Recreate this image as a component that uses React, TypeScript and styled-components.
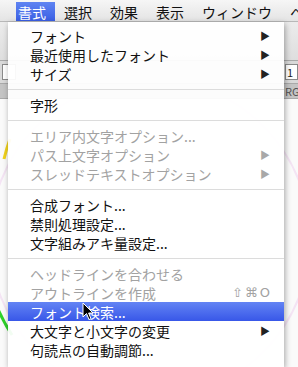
import * as React from 'react'
import styled, { createGlobalStyle } from 'styled-components'

const GlobalStyle = createGlobalStyle`
  html, body {
    margin: 0;
    padding: 0;
    width: 298px;
    height: 367px;
    overflow: hidden;
    background: #fff;
  }
  * {
    box-sizing: border-box;
    font-family: 'Noto Sans CJK JP', 'Noto Sans', sans-serif;
  }
`

const StyledScreen = styled.div`
  position: relative;
  width: 298px;
  height: 367px;
  display: flex;
  flex-direction: column;
  overflow: hidden;
`

const StyledMenuBar = styled.nav`
  height: 22px;
  flex: none;
  display: flex;
  align-items: stretch;
  padding-left: 16px;
  background: linear-gradient(#f6f6f6, #e4e4e4);
  border-bottom: 1px solid #b8b8b8;
  white-space: nowrap;
  overflow: hidden;
`

const StyledMenuTitle = styled.div<{ $active?: boolean }>`
  flex: none;
  display: flex;
  align-items: center;
  padding: 0 9px 0 ${(p) => (p.$active ? '2px' : '9px')};
  margin-top: 2px;
  font-size: 14px;
  line-height: 1;
  color: ${(p) => (p.$active ? '#fff' : '#111')};
  background: ${(p) => (p.$active ? 'linear-gradient(#5f84f2, #3a5fe4)' : 'transparent')};
`

const StyledToolbar = styled.div<{ $height: number; $bg: string }>`
  height: ${(p) => p.$height}px;
  flex: none;
  background: ${(p) => p.$bg};
  border-bottom: 1px solid #a9a9a9;
  display: flex;
  align-items: center;
  justify-content: space-between;
  padding: 0 0 0 2px;
  font-size: 11px;
  color: #555;
  overflow: hidden;
`

const StyledField = styled.div<{ $width: number }>`
  flex: none;
  width: ${(p) => p.$width}px;
  height: 16px;
  background: #fff;
  border: 1px solid #8a8a8a;
  font-size: 11px;
  line-height: 14px;
  color: #222;
  padding-left: 1px;
  overflow: hidden;
`

const StyledCaption = styled.span`
  flex: none;
  width: 13px;
  overflow: hidden;
  white-space: nowrap;
`

const StyledCanvas = styled.div`
  flex: 1;
  background: #fafafa;
  display: flex;
`

const StyledRing = styled.svg`
  width: 298px;
  height: 270px;
`

const StyledMenu = styled.div`
  position: absolute;
  top: 22px;
  left: 8px;
  width: 276px;
  height: 345px;
  padding: 4px 0;
  background: rgba(255, 255, 255, 0.94);
  box-shadow: 1px 2px 6px rgba(0, 0, 0, 0.35);
  display: flex;
  flex-direction: column;
`

const StyledItem = styled.div<{ $disabled?: boolean; $selected?: boolean }>`
  height: 19px;
  flex: none;
  display: flex;
  align-items: center;
  padding: 0 14px 0 22px;
  font-size: 14px;
  line-height: 1;
  color: ${(p) => (p.$selected ? '#fff' : p.$disabled ? '#a2a2a2' : '#111')};
  background: ${(p) => (p.$selected ? 'linear-gradient(#6384f4, #3857e8)' : 'transparent')};
`

const StyledLabel = styled.span`
  flex: 1;
  white-space: nowrap;
`

const StyledArrow = styled.span<{ $disabled?: boolean }>`
  font-size: 10px;
  color: ${(p) => (p.$disabled ? '#a8a8a8' : '#222')};
`

const StyledShortcut = styled.span`
  font-size: 13px;
  letter-spacing: 2px;
  margin-right: -2px;
  font-family: 'DejaVu Sans', 'Noto Sans', sans-serif;
  color: #a2a2a2;
`

const StyledSeparator = styled.div`
  height: 12px;
  flex: none;
  display: flex;
  align-items: center;
  &::after {
    content: '';
    flex: 1;
    height: 1px;
    background: #dcdcdc;
  }
`

const StyledCursor = styled.svg`
  position: absolute;
  left: 82px;
  top: 302px;
  width: 12px;
  height: 19px;
`

type Entry =
  | { sep: true }
  | { label: string; sub?: boolean; disabled?: boolean; selected?: boolean; shortcut?: string }

const ENTRIES: Entry[] = [
  { label: 'フォント', sub: true },
  { label: '最近使用したフォント', sub: true },
  { label: 'サイズ', sub: true },
  { sep: true },
  { label: '字形' },
  { sep: true },
  { label: 'エリア内文字オプション...', disabled: true },
  { label: 'パス上文字オプション', disabled: true, sub: true },
  { label: 'スレッドテキストオプション', disabled: true, sub: true },
  { sep: true },
  { label: '合成フォント...' },
  { label: '禁則処理設定...' },
  { label: '文字組みアキ量設定...' },
  { sep: true },
  { label: 'ヘッドラインを合わせる', disabled: true },
  { label: 'アウトラインを作成', disabled: true, shortcut: '⇧⌘O' },
  { label: 'フォント検索...', selected: true },
  { label: '大文字と小文字の変更', sub: true },
  { label: '句読点の自動調節...' },
]

const TITLES = ['書式', '選択', '効果', '表示', 'ウィンドウ', 'ヘ']

export default function App() {
  return (
    <>
      <GlobalStyle />
      <StyledScreen>
        <StyledMenuBar>
          {TITLES.map((t, i) => (
            <StyledMenuTitle key={t} $active={i === 0}>
              {t}
            </StyledMenuTitle>
          ))}
        </StyledMenuBar>
        <StyledToolbar $height={39} $bg="linear-gradient(#ececec, #dedede)" />
        <StyledToolbar $height={23} $bg="#d9d9d9">
          <StyledField $width={14} />
          <StyledField $width={13}>1</StyledField>
        </StyledToolbar>
        <StyledToolbar $height={15} $bg="#c4c4c4">
          <span />
          <StyledCaption>RG</StyledCaption>
        </StyledToolbar>
        <StyledCanvas>
          <StyledRing viewBox="0 0 298 270">
            <path d="M 10 40 A 165 165 0 0 0 4 60" stroke="#f1d21c" strokeWidth="3" fill="none" />
            <path d="M -6 200 A 165 165 0 0 0 12 236" stroke="#2ed12a" strokeWidth="3" fill="none" />
            <circle cx="150" cy="140" r="160" stroke="#f4e4f4" strokeWidth="2" fill="none" />
          </StyledRing>
        </StyledCanvas>

        <StyledMenu>
          {ENTRIES.map((e, i) =>
            'sep' in e ? (
              <StyledSeparator key={i} />
            ) : (
              <StyledItem key={i} $disabled={e.disabled} $selected={e.selected}>
                <StyledLabel>{e.label}</StyledLabel>
                {e.sub && <StyledArrow $disabled={e.disabled}>▶</StyledArrow>}
                {e.shortcut && <StyledShortcut>{e.shortcut}</StyledShortcut>}
              </StyledItem>
            )
          )}
        </StyledMenu>

        <StyledCursor viewBox="0 0 12 19">
          <path
            d="M1 1 L1 15 L4.5 11.5 L7 17.5 L9 16.7 L6.6 11 L11 11 Z"
            fill="#000"
            stroke="#fff"
            strokeWidth="1"
            strokeLinejoin="round"
          />
        </StyledCursor>
      </StyledScreen>
    </>
  )
}
